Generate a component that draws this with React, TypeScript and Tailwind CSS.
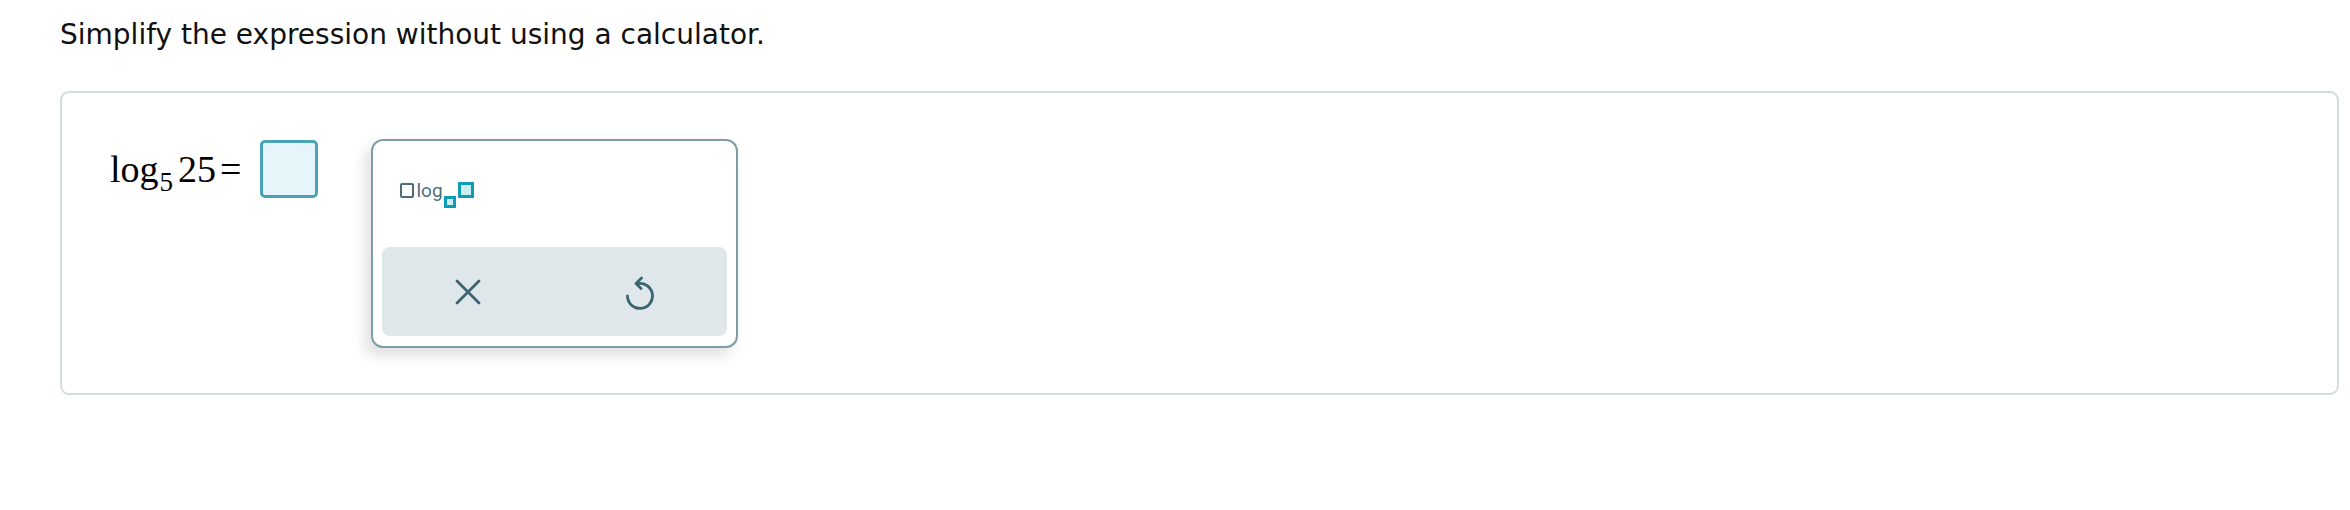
import React from 'react';

const UndoIcon = () => (
  <svg width="30" height="36" viewBox="0 0 30 36" fill="none" stroke="#3b6573" strokeWidth="2.8" strokeLinecap="round" strokeLinejoin="round">
    <path d="M2.5 22 A12.5 12.5 0 1 0 12 9.8" />
    <path d="M16.5 4 L11 9.6 L16 14.5" />
  </svg>
);

const CloseIcon = () => (
  <svg width="26" height="26" viewBox="0 0 26 26" fill="none" stroke="#3b6573" strokeWidth="2.8" strokeLinecap="round">
    <path d="M2 2 L24 24" />
    <path d="M24 2 L2 24" />
  </svg>
);

export default function App() {
  return (
    <div className="w-[2350px] h-[510px] bg-white pl-[60px] pr-[11px] pt-[18px]">
      <p className="text-[28px] leading-[34px] text-[#111] font-['DejaVu_Sans',Verdana,sans-serif]">
        Simplify the expression without using a calculator.
      </p>

      <div className="mt-[39px] h-[304px] border-2 border-[#d3dde0] rounded-[9px] pl-[48px] pt-[47px]">
        <div className="flex items-start">
          {/* expression + answer box */}
          <div className="flex items-center">
            <span className="font-['Liberation_Serif','Times_New_Roman',serif] text-[38px] leading-none text-black flex items-baseline">
              <span>log</span>
              <span className="text-[27px] relative top-[9px] ml-[1px]">5</span>
              <span className="ml-[5px]">25</span>
              <span className="ml-[4px]">=</span>
            </span>
            <div className="ml-[18px] w-[58px] h-[58px] border-[3px] border-[#4ba3b6] bg-[#e6f5f9] rounded-[5px]" />
          </div>

          {/* keypad popup */}
          <div className="ml-[53px] -mt-[1px] w-[367px] h-[209px] bg-white border-2 border-[#7d9ea6] rounded-[12px] shadow-[-6px_8px_14px_rgba(0,0,0,0.12)] flex flex-col px-[9px] pb-[10px]">
            <div className="flex items-start pl-[18px] pt-[42px]">
              <div className="w-[14px] h-[15px] border-2 border-[#4b6c78] rounded-[2px] bg-white" />
              <span className="ml-[3px] -mt-[2px] text-[19px] leading-[19px] text-[#4f6f7b] font-['Roboto',sans-serif]">log</span>
              <div className="ml-[1px] mt-[13px] w-[12px] h-[12px] border-[3px] border-[#0f9bb2] bg-[#cbeef3]" />
              <div className="ml-[2px] -mt-[1px] w-[16px] h-[16px] border-[3px] border-[#0f9bb2] bg-[#cbeef3]" />
            </div>
            <div className="mt-auto h-[89px] bg-[#e0e7ea] rounded-[8px] flex">
              <button className="flex-1 flex items-center justify-center">
                <CloseIcon />
              </button>
              <button className="flex-1 flex items-center justify-center">
                <UndoIcon />
              </button>
            </div>
          </div>
        </div>
      </div>
    </div>
  );
}
